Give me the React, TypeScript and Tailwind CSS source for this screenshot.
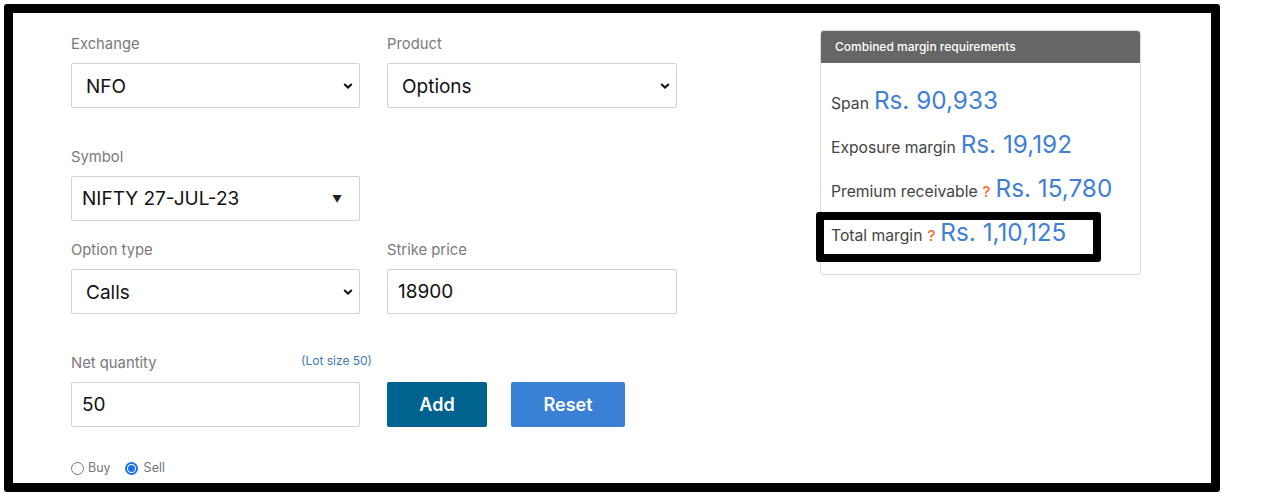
import React from 'react';

const font = { fontFamily: 'Inter, "Noto Sans", sans-serif' };

const Chevron = () => (
  <svg className="pointer-events-none absolute right-[7px] top-1/2 -translate-y-1/2" width="10" height="7" viewBox="0 0 10 7">
    <path d="M1.2 1.4 L5 5 L8.8 1.4" fill="none" stroke="#111" strokeWidth="2" />
  </svg>
);

const Field = ({ label, children, extra }: { label: string; children: React.ReactNode; extra?: React.ReactNode }) => (
  <div className="flex flex-col">
    <div className="flex items-end justify-between h-5 mb-[9px]">
      <span className="text-[14.8px] leading-5 text-[#7a7a7a]">{label}</span>
      {extra}
    </div>
    {children}
  </div>
);

const NativeSelect = ({ value }: { value: string }) => (
  <div className="relative">
    <select
      defaultValue={value}
      className="appearance-none w-full h-[45px] border border-[#d2d2d2] rounded-[2px] bg-white pl-[14px] pt-[3px] text-[19px] text-[#111] outline-none"
    >
      <option>{value}</option>
    </select>
    <Chevron />
  </div>
);

const TextBox = ({ value }: { value: string }) => (
  <input
    defaultValue={value}
    className="w-full h-[45px] border border-[#d2d2d2] rounded-[2px] bg-white pl-[10px] text-[19px] text-[#111] outline-none"
  />
);

const Row = ({ label, value, help }: { label: string; value: string; help?: boolean }) => (
  <div className="flex items-baseline h-[44px]">
    <span className="text-[15.7px] text-[#444]">{label}</span>
    {help && <span className="ml-[5px] text-[15px] font-medium text-[#f26b2a]">?</span>}
    <span className="ml-[5px] text-[24.3px] text-[#3f80d6]">{value}</span>
  </div>
);

export default function App() {
  return (
    <div className="w-[1263px] h-[498px] bg-white" style={font}>
      <div className="ml-[4px] mt-[4px] w-[1216px] h-[488px] border-[9px] border-black rounded-[3px] flex pl-[58px] pt-[21px]">
        {/* form */}
        <div className="w-[606px] flex flex-col">
          <div className="grid grid-cols-[289px_290px] gap-x-[27px]">
            <Field label="Exchange"><NativeSelect value="NFO" /></Field>
            <Field label="Product"><NativeSelect value="Options" /></Field>
          </div>

          <div className="mt-[39px] w-[289px]">
            <Field label="Symbol">
              <div className="flex items-center justify-between h-[45px] border border-[#d2d2d2] rounded-[2px] pl-[10px] pr-[17px] pt-[1px] text-[19px] text-[#111]">
                <span>NIFTY 27-JUL-23</span>
                <span className="text-[10px] text-[#222]">▼</span>
              </div>
            </Field>
          </div>

          <div className="mt-[19px] grid grid-cols-[289px_290px] gap-x-[27px]">
            <Field label="Option type"><NativeSelect value="Calls" /></Field>
            <Field label="Strike price"><TextBox value="18900" /></Field>
          </div>

          <div className="mt-[39px] flex items-end gap-[27px]">
            <div className="w-[289px]">
              <Field
                label="Net quantity"
                extra={<span className="text-[12px] leading-4 mb-[4px] -mr-[12px] text-[#3b78b8]">(Lot size 50)</span>}
              >
                <TextBox value="50" />
              </Field>
            </div>
            <button className="w-[100px] h-[45px] rounded-[2px] bg-[#00628f] text-white text-[18px] font-semibold">Add</button>
            <button className="ml-[-3px] w-[114px] h-[45px] rounded-[2px] bg-[#3a80d4] text-white text-[18px] font-semibold">Reset</button>
          </div>

          <div className="mt-[32px] flex items-center text-[12.5px] text-[#777]">
            <label className="flex items-center">
              <span className="w-[13px] h-[13px] rounded-full border border-[#777] mr-[4px]" />
              Buy
            </label>
            <label className="flex items-center ml-[14px]">
              <span className="w-[13px] h-[13px] rounded-full border-2 border-[#1a73e8] mr-[6px] flex items-center justify-center">
                <span className="w-[7px] h-[7px] rounded-full bg-[#1a73e8]" />
              </span>
              Sell
            </label>
          </div>
        </div>

        {/* margin panel */}
        <div className="ml-[143px] mt-[-4px] w-[321px] h-[245px] border border-[#dcdcdc] rounded-[3px] flex flex-col">
          <div className="h-[32px] bg-[#666] rounded-t-[3px] flex items-center pl-[14px] text-[12px] font-medium text-white">
            Combined margin requirements
          </div>
          <div className="relative pl-[10px] pt-[19px]">
            <Row label="Span" value="Rs. 90,933" />
            <Row label="Exposure margin" value="Rs. 19,192" />
            <Row label="Premium receivable" value="Rs. 15,780" help />
            <Row label="Total margin" value="Rs. 1,10,125" help />
            <div className="absolute left-[-5px] top-[149px] w-[285px] h-[50px] border-[8px] border-black rounded-[3px]" />
          </div>
        </div>
      </div>
    </div>
  );
}
